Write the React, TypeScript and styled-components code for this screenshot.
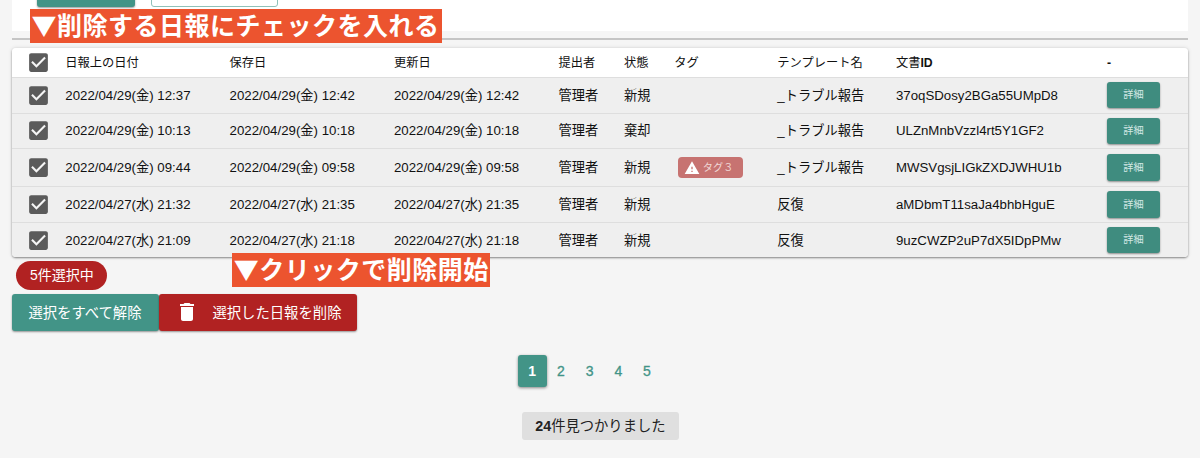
import React from 'react';
import styled, { createGlobalStyle, css } from 'styled-components';

const TEAL = '#429487';
const RED = '#b12222';

const GlobalStyle = createGlobalStyle`
  * { box-sizing: border-box; }
  html, body { margin: 0; height: 458px; overflow: hidden; background: #f5f5f5; }
  body {
    font-family: "Liberation Sans", "Noto Sans CJK JP", sans-serif;
    color: #111;
  }
  button { font-family: inherit; border: 0; margin: 0; padding: 0; }
`;

const Page = styled.main`
  position: relative;
  width: 1200px;
  height: 458px;
  padding: 0 11.6px 0 12.4px;
  overflow: hidden;
  display: flex;
  flex-direction: column;
`;

const FilterPanel = styled.section`
  flex: none;
  height: 31px;
  background: #fff;
  display: flex;
  align-items: flex-start;
  gap: 16px;
  padding-left: 24.5px;
`;

const FilterButton = styled.button<{ $outlined?: boolean }>`
  height: 36px;
  margin-top: -29.5px;
  border-radius: 3px;
  ${({ $outlined }) =>
    $outlined
      ? css`width: 127px; background: #fff; border: 1px solid #8fc1b9;`
      : css`width: 98.5px; background: ${TEAL}; box-shadow: 0 1px 2px rgba(0, 0, 0, 0.4);`}
`;

const Divider = styled.hr`
  flex: none;
  width: 100%;
  height: 2px;
  margin: 7px 0 7.5px;
  border: 0;
  background: #c5c5c5;
`;

const Table = styled.div`
  flex: none;
  border-radius: 4px;
  background: #efefef;
  overflow: hidden;
`;

const TableShadow = styled.div`
  flex: none;
  border-radius: 4px;
  box-shadow: 0 1px 2px rgba(0, 0, 0, 0.42), 0 0 4px rgba(0, 0, 0, 0.12);
`;

const Row = styled.div<{ $height: number; $head?: boolean }>`
  display: grid;
  grid-template-columns: 36.3px 164.3px 164.4px 164.5px 65.5px 50.3px 103px 118.7px 211px 1fr;
  align-items: center;
  height: ${({ $height }) => $height}px;
  padding-left: 16.6px;
  font-size: ${({ $head }) => ($head ? 12.25 : 13.25)}px;
  line-height: 20px;
  white-space: nowrap;
  background: ${({ $head }) => ($head ? '#fff' : '#efefef')};
  border-bottom: 1px solid #dedede;
  &:last-child { border-bottom: 0; }
`;

const Cell = styled.span`
  padding-top: 1.2px;
`;

const Latin = styled.span`
  font-weight: 700;
`;

const CheckIcon = styled.svg`
  display: block;
  width: 25px;
  height: 25px;
  margin-left: -3px;
  fill: #5b5b5b;
`;

const DetailButton = styled.button`
  display: block;
  width: 53px;
  height: 26.5px;
  border-radius: 3px;
  background: #3f8c7f;
  color: #d5e8e5;
  font-size: 10.2px;
  line-height: 26px;
  box-shadow: 0 1px 2px rgba(0, 0, 0, 0.4);
`;

const Tag = styled.span`
  display: flex;
  align-items: center;
  gap: 3px;
  width: 65px;
  height: 21px;
  margin-left: 3.5px;
  padding-left: 6px;
  border-radius: 4px;
  background: #c77371;
  color: #f1d9d8;
  font-size: 10.2px;
  svg { width: 16px; height: 16px; fill: #fff; flex: none; }
`;

const SelectedCount = styled.div`
  flex: none;
  width: 91px;
  height: 29px;
  margin: 4px 0 3.5px 4px;
  border-radius: 15px;
  background: ${RED};
  color: #fff;
  font-size: 14px;
  line-height: 29px;
  text-align: center;
`;

const Actions = styled.div`
  flex: none;
  display: flex;
`;

const ActionButton = styled.button<{ $danger?: boolean }>`
  display: flex;
  align-items: center;
  width: ${({ $danger }) => ($danger ? 198.5 : 146.5)}px;
  height: 37px;
  padding: 0 0 2px ${({ $danger }) => ($danger ? 16.5 : 16)}px;
  gap: 13px;
  border-radius: 3px;
  background: ${({ $danger }) => ($danger ? RED : TEAL)};
  color: #fff;
  font-size: 14.35px;
  white-space: nowrap;
  box-shadow: 0 1px 2px rgba(0, 0, 0, 0.4);
  svg { width: 24px; height: 24px; fill: #fff; flex: none; margin-top: 2px; }
`;

const Pagination = styled.nav`
  flex: none;
  display: flex;
  align-self: center;
  width: 165px;
  margin-top: 24.5px;
`;

const PageButton = styled.button<{ $active?: boolean }>`
  width: 28.7px;
  flex: none;
  height: 31.5px;
  padding-top: 1px;
  border-radius: 3px;
  font-size: 14px;
  background: ${({ $active }) => ($active ? TEAL : 'transparent')};
  color: ${({ $active }) => ($active ? '#fff' : TEAL)};
  font-weight: ${({ $active }) => ($active ? 700 : 400)};
  -webkit-text-stroke: ${({ $active }) => ($active ? '0' : `0.3px ${TEAL}`)};
  box-shadow: ${({ $active }) => ($active ? '0 1px 3px rgba(0, 0, 0, 0.45)' : 'none')};
`;

const ResultCount = styled.div`
  flex: none;
  align-self: center;
  width: 157px;
  height: 28px;
  margin-top: 25px;
  border-radius: 3px;
  background: #dfdfdf;
  color: #222;
  font-size: 14.3px;
  line-height: 28px;
  text-align: center;
  white-space: nowrap;
`;

const Callout = styled.div<{ $x: number; $y: number; $width: number }>`
  position: absolute;
  left: ${({ $x }) => $x}px;
  top: ${({ $y }) => $y}px;
  width: ${({ $width }) => $width}px;
  height: 33.5px;
  padding-left: 2px;
  background: #ec542f;
  color: #fff;
  font: 700 25px/30px "Noto Sans CJK JP", sans-serif;
  letter-spacing: 0.5px;
  white-space: nowrap;
`;

const Checkbox = () => (
  <CheckIcon viewBox="0 0 24 24">
    <rect x="4" y="4" width="16" height="16" fill="#f5f5f5" />
    <path d="M19 3H5c-1.11 0-2 .9-2 2v14c0 1.1.89 2 2 2h14c1.11 0 2-.9 2-2V5c0-1.1-.89-2-2-2zm-9 14l-5-5 1.41-1.41L10 14.17l7.59-7.59L19 8l-9 9z" />
  </CheckIcon>
);

const reports = [
  { date: '2022/04/29(金) 12:37', saved: '2022/04/29(金) 12:42', status: '新規', template: '_トラブル報告', id: '37oqSDosy2BGa55UMpD8', height: 36 },
  { date: '2022/04/29(金) 10:13', saved: '2022/04/29(金) 10:18', status: '棄却', template: '_トラブル報告', id: 'ULZnMnbVzzl4rt5Y1GF2', height: 35.5 },
  { date: '2022/04/29(金) 09:44', saved: '2022/04/29(金) 09:58', status: '新規', tag: 'タグ３', template: '_トラブル報告', id: 'MWSVgsjLIGkZXDJWHU1b', height: 38 },
  { date: '2022/04/27(水) 21:32', saved: '2022/04/27(水) 21:35', status: '新規', template: '反復', id: 'aMDbmT11saJa4bhbHguE', height: 36 },
  { date: '2022/04/27(水) 21:09', saved: '2022/04/27(水) 21:18', status: '新規', template: '反復', id: '9uzCWZP2uP7dX5IDpPMw', height: 34 },
];

export default function App() {
  return (
    <>
      <GlobalStyle />
      <Page lang="ja">
        <FilterPanel>
          <FilterButton />
          <FilterButton $outlined />
        </FilterPanel>
        <Divider />
        <TableShadow>
          <Table>
            <Row $height={30} $head>
              <Checkbox />
              <Cell>日報上の日付</Cell>
              <Cell>保存日</Cell>
              <Cell>更新日</Cell>
              <Cell>提出者</Cell>
              <Cell>状態</Cell>
              <Cell>タグ</Cell>
              <Cell>テンプレート名</Cell>
              <Cell>文書<Latin>ID</Latin></Cell>
              <Cell><Latin>-</Latin></Cell>
            </Row>
            {reports.map((r) => (
              <Row key={r.id} $height={r.height}>
                <Checkbox />
                <Cell>{r.date}</Cell>
                <Cell>{r.saved}</Cell>
                <Cell>{r.saved}</Cell>
                <Cell>管理者</Cell>
                <Cell>{r.status}</Cell>
                <span>
                  {r.tag && (
                    <Tag>
                      <svg viewBox="0 0 24 24"><path d="M1 21h22L12 2 1 21zm12-3h-2v-2h2v2zm0-4h-2v-4h2v4z" /></svg>
                      {r.tag}
                    </Tag>
                  )}
                </span>
                <Cell>{r.template}</Cell>
                <Cell>{r.id}</Cell>
                <DetailButton>詳細</DetailButton>
              </Row>
            ))}
          </Table>
        </TableShadow>
        <SelectedCount>5件選択中</SelectedCount>
        <Actions>
          <ActionButton>選択をすべて解除</ActionButton>
          <ActionButton $danger>
            <svg viewBox="0 0 24 24"><path d="M6 19c0 1.1.9 2 2 2h8c1.1 0 2-.9 2-2V7H6v12zM19 4h-3.5l-1-1h-5l-1 1H5v2h14V4z" /></svg>
            選択した日報を削除
          </ActionButton>
        </Actions>
        <Pagination>
          {[1, 2, 3, 4, 5].map((n) => (
            <PageButton key={n} $active={n === 1}>{n}</PageButton>
          ))}
        </Pagination>
        <ResultCount><Latin>24</Latin>件見つかりました</ResultCount>
        <Callout $x={29.6} $y={9} $width={412}>▼削除する日報にチェックを入れる</Callout>
        <Callout $x={231.8} $y={253} $width={258.2}>▼クリックで削除開始</Callout>
      </Page>
    </>
  );
}
